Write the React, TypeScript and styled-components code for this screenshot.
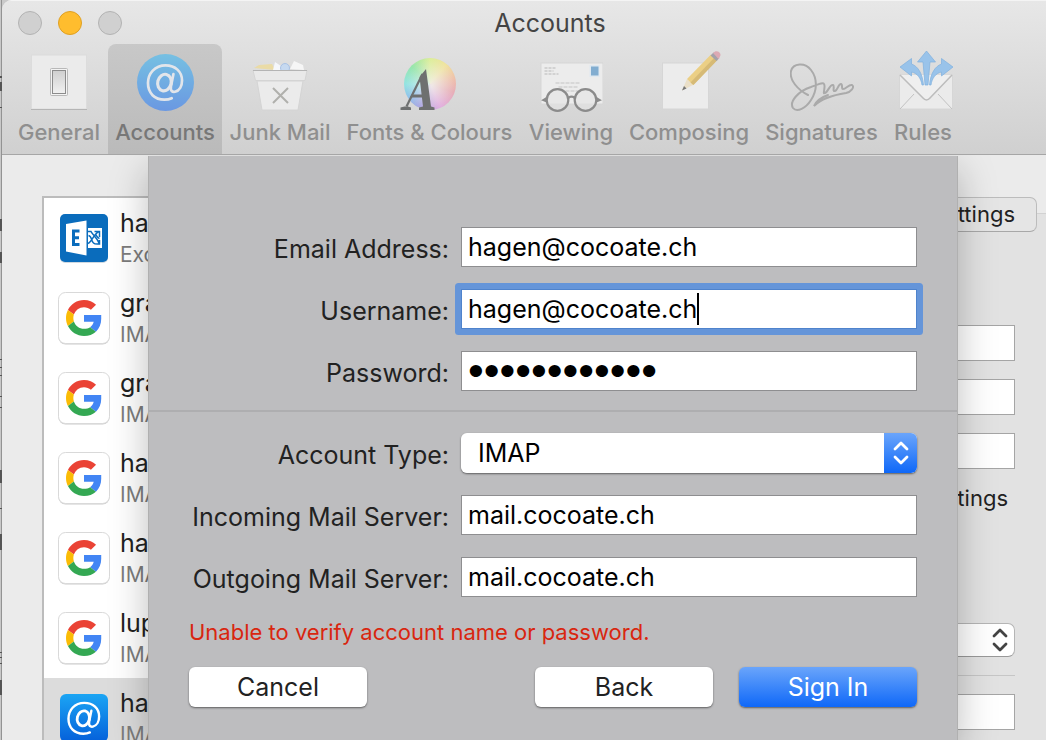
import React from 'react';
import styled, { createGlobalStyle, css } from 'styled-components';

const Global = createGlobalStyle`
  * { box-sizing: border-box; }
  body { margin: 0; background: #c9c9c9; overflow: hidden; font-family: Inter, "Liberation Sans", sans-serif; }
  button, input, select { font-family: inherit; }
`;

const Desktop = styled.div`
  display: flex;
  height: 100vh;
`;

const Behind = styled.div`
  width: 2px;
  flex: none;
  overflow: hidden;
  background: linear-gradient(90deg, #c8c8c8 1px, #939393 1px);
  svg { display: block; }
`;

const Window = styled.main`
  flex: 1;
  min-width: 0;
  display: flex;
  flex-direction: column;
  overflow: hidden;
  border-top-left-radius: 10px;
  background: #ebebeb;
`;

const Header = styled.header`
  height: 155px;
  flex: none;
  display: flex;
  flex-direction: column;
  background: linear-gradient(#e7e7e7, #d0d0d0);
  border-top: 1px solid #f4f4f4;
  border-bottom: 1px solid #a6a6a6;
`;

const TitleBar = styled.div`
  height: 43px;
  flex: none;
  display: grid;
  grid-template-columns: 120px 1fr 84px;
  align-items: center;
  padding-left: 16px;
`;

const Lights = styled.div`
  display: flex;
  gap: 16px;
`;

const Light = styled.button<{ $on?: boolean }>`
  width: 24px;
  height: 24px;
  padding: 0;
  border-radius: 50%;
  border: 1px solid ${p => (p.$on ? '#dfa023' : '#b3b3b3')};
  background: ${p => (p.$on ? '#ffbd2e' : '#d0d0d0')};
`;

const Title = styled.h1`
  margin: 0;
  font-size: 25px;
  line-height: 30px;
  font-weight: 400;
  text-align: center;
  color: #444;
`;

const Tools = styled.nav`
  flex: 1;
  display: flex;
  padding-left: 8px;
`;

const Tool = styled.button<{ $w: number; $on?: boolean }>`
  width: ${p => p.$w}px;
  flex: none;
  display: flex;
  flex-direction: column;
  align-items: center;
  gap: 5px;
  padding: 6px 0 0;
  border: 0;
  border-radius: 8px 8px 0 0;
  background: ${p => (p.$on ? 'linear-gradient(#c8c8c8, #bababa)' : 'none')};
  color: ${p => (p.$on ? '#777' : '#8f8f8f')};
  font-size: 22px;
  line-height: 26px;
  font-weight: 500;
  white-space: nowrap;
  svg { display: block; }
`;

const Body = styled.div`
  flex: 1;
  min-height: 0;
  position: relative;
  display: flex;
  justify-content: space-between;
  padding: 41px 0 0 40px;
  overflow: hidden;
`;

const List = styled.ul`
  width: 300px;
  margin: 0;
  padding: 0;
  list-style: none;
  border: 2px solid #bcbcbc;
  background: #fff;
`;

const Row = styled.li<{ $on?: boolean }>`
  height: 80px;
  display: flex;
  align-items: center;
  gap: 10px;
  padding-left: 14px;
  background: ${p => (p.$on ? '#dcdcdc' : '#fff')};
  svg { display: block; flex: none; }
`;

const RowText = styled.div`
  display: flex;
  flex-direction: column;
  gap: 2px;
`;

const Name = styled.span`
  font-size: 25px;
  line-height: 32px;
  color: #222;
`;

const Kind = styled.span`
  font-size: 21px;
  line-height: 28px;
  color: #7c7c7c;
`;

const Panel = styled.section`
  width: 500px;
  display: flex;
  flex-direction: column;
`;

const TabRow = styled.div`
  display: flex;
  justify-content: flex-end;
  height: 36px;
  padding: 1px 9px 0 0;
  background: linear-gradient(#ebebeb 17px, #d2d2d2 17px, #d2d2d2 18px, #e2e2e2 18px);
`;

const Tab = styled.button`
  height: 35px;
  padding: 0 21px 2px;
  border: 1px solid #bcbcbc;
  border-bottom-color: #a8a8a8;
  border-radius: 7px;
  background: #e5e5e5;
  color: #222;
  font-size: 22px;
  line-height: 30px;
`;

const Settings = styled.div`
  flex: 1;
  display: flex;
  flex-direction: column;
  gap: 18px;
  padding: 93px 31px 0 0;
  background: #e2e2e2;
`;

const BackInput = styled.input`
  width: 100%;
  height: 36px;
  flex: none;
  border: 1px solid #a5a5a5;
  background: #fff;
`;

const Check = styled.label`
  height: 22px;
  display: flex;
  align-items: center;
  justify-content: flex-end;
  gap: 8px;
  padding-right: 7px;
  font-size: 22px;
  white-space: nowrap;
  color: #222;
`;

const BackSelectWrap = styled.div`
  position: relative;
  flex: none;
  margin-top: 96px;
  svg { position: absolute; right: 7px; top: 5px; pointer-events: none; }
`;

const BackSelect = styled.select`
  display: block;
  appearance: none;
  width: 100%;
  height: 34px;
  border: 1px solid #b5b5b5;
  border-bottom-color: #999;
  border-radius: 7px;
  background: #fff;
`;

const Rule = styled.hr`
  width: 100%;
  height: 1px;
  margin: 0;
  border: 0;
  flex: none;
  background: #c6c6c6;
`;

const Sheet = styled.form`
  position: absolute;
  top: 1px;
  bottom: 0;
  left: 146px;
  right: 88px;
  padding-top: 71px;
  background: #bdbdbf;
  border: 1px solid #b0b0b0;
  border-width: 0 1px;
  box-shadow: 0 14px 36px rgba(0, 0, 0, 0.26);
`;

const Fields = styled.div`
  display: grid;
  grid-template-columns: 260px 1fr;
  gap: 22px 12px;
  padding: 0 40px;
`;

const FieldLabel = styled.label`
  padding-top: 6px;
  font-size: 25px;
  line-height: 32px;
  text-align: right;
  white-space: nowrap;
  color: #222;
`;

const field = css`
  display: block;
  width: 100%;
  height: 40px;
  font-size: 25px;
  color: #000;
  background: #fff;
`;

const Input = styled.input<{ $focus?: boolean }>`
  ${field}
  min-width: 0;
  padding: 0 6px;
  border: 1px solid ${p => (p.$focus ? '#4f83cc' : '#8e8e90')};
  border-radius: 0;
  outline: none;
`;

const Password = styled(Input)`
  font-family: "Liberation Sans", sans-serif;
  font-size: 45px;
`;

const InputBox = styled.div`
  position: relative;
  border-radius: 1px;
  box-shadow: 0 0 0 6px #6595d9;
`;

const Caret = styled.span`
  position: absolute;
  left: 7px;
  top: 4px;
  height: 32px;
  font-size: 25px;
  line-height: 32px;
  border-right: 2px solid #000;
  color: transparent;
  pointer-events: none;
`;

const Divider = styled.hr`
  height: 2px;
  margin: 19px 0 21px;
  border: 0;
  background: #aeaeb0;
`;

const raised = css`
  border-radius: 6px;
  box-shadow: 0 1px 2px rgba(0, 0, 0, 0.5);
`;

const SelectWrap = styled.div`
  ${raised}
  position: relative;
  height: 40px;
  overflow: hidden;
`;

const Select = styled.select`
  ${field}
  appearance: none;
  padding: 0 48px 0 17px;
  border: 0;
`;

const Stepper = styled.span`
  position: absolute;
  top: 0;
  right: 0;
  bottom: 0;
  width: 33px;
  display: flex;
  align-items: center;
  justify-content: center;
  background: linear-gradient(#6aa5fb, #0f68f8);
  pointer-events: none;
`;

const ErrorText = styled.p`
  margin: 20px 40px 19px;
  font-size: 22px;
  line-height: 31px;
  color: #d9260f;
`;

const Actions = styled.div`
  display: flex;
  gap: 26px;
  padding: 0 40px;
`;

const Button = styled.button<{ $primary?: boolean; $start?: boolean }>`
  ${raised}
  width: 178px;
  height: 40px;
  padding: 0;
  margin-right: ${p => (p.$start ? 'auto' : '0')};
  border: 0;
  font-size: 25px;
  line-height: 30px;
  color: ${p => (p.$primary ? '#fff' : '#222')};
  background: ${p => (p.$primary ? 'linear-gradient(#6aa5fb, #0f68f8)' : '#fff')};
`;

const icon = { width: 64, height: 64, viewBox: '0 0 64 64', fill: 'none', 'aria-hidden': true } as const;

const GeneralIcon = () => (
  <svg {...icon}>
    <defs><linearGradient id="sw" x2="0" y2="1"><stop stopColor="#cfcfcf" /><stop offset="1" stopColor="#f1f1f1" /></linearGradient></defs>
    <rect x="4.5" y="5" width="55" height="54" fill="#ebebeb" stroke="#dcdcdc" />
    <path d="M4 59.5h56" stroke="#b5b5b5" />
    <rect x="23.5" y="18.5" width="17" height="27" rx="1" fill="#f3f3f3" stroke="#b8b8b8" />
    <rect x="25.5" y="20.5" width="13" height="23" fill="url(#sw)" stroke="#8c8c8c" />
  </svg>
);

const AtGlyph = ({ color }: { color: string }) => (
  <g stroke={color} fill="none" strokeLinecap="round" transform="translate(32 32) scale(1.12) translate(-32 -32)">
    <ellipse cx="31.5" cy="32.5" rx="6" ry="7.5" transform="rotate(14 31.5 32.5)" strokeWidth="2.8" />
    <path d="M39.500 25l-2.200 11c-.6 4 1.200 5.200 3.700 4.700 4-.9 6.200-5.200 6.200-10 0-8-6-13.500-14.700-13.500-9.500 0-15.700 7-15.700 15.800 0 9 6 14.800 14.700 14.800 2.800 0 4.800-.5 6.500-1.300" strokeWidth="2.400" />
  </g>
);

const AccountsIcon = () => (
  <svg {...icon}>
    <defs><linearGradient id="ac" x2="0" y2="1"><stop stopColor="#76c0e2" /><stop offset="1" stopColor="#6a98e2" /></linearGradient></defs>
    <circle cx="32.5" cy="32.5" r="28.5" fill="url(#ac)" />
    <AtGlyph color="#e2e5ea" />
  </svg>
);

const JunkIcon = () => (
  <svg {...icon}>
    <path d="M6 18l5-3 13-1 3 6z" fill="#eadba6" />
    <path d="M25 20l2-8 6 4 3 4z" fill="#f5f7fb" />
    <circle cx="37" cy="18" r="4.500" fill="#c6d9f0" stroke="#a9c2e4" />
    <path d="M42 19l4-8 9 4 1 5z" fill="#f6f6f6" />
    <path d="M9 31h46l-5 29H14z" fill="#ebebeb" stroke="#d4d4d4" />
    <path d="M5 20.500h54l-2 10H7.500z" fill="#e9e9e9" stroke="#d4d4d4" />
    <path d="M5 20.500h54" stroke="#b4b4b4" />
    <path d="M25 38l15 15M40 38L25 53" stroke="#b0b0ac" strokeWidth="2" />
  </svg>
);

const Wheel = styled.div`
  width: 64px;
  height: 64px;
  display: grid;
  padding: 8px 5px 4px 6px;
  > span {
    grid-area: 1 / 1;
    width: 52px;
    height: 52px;
    border-radius: 50%;
    background: radial-gradient(circle at 54% 52%, rgba(240, 240, 235, 0.9), rgba(240, 240, 235, 0) 68%),
      conic-gradient(#dcee9a, #f0e29a 40deg, #eeb8a4 80deg, #e6a4b0 110deg, #e0a8de 155deg, #a8a4e2 205deg, #90c4ea 240deg, #94e4e2 270deg, #98e6ac 315deg, #dcee9a);
  }
  > svg { grid-area: 1 / 1; }
`;

const FontsIcon = () => (
  <Wheel>
    <span />
    <svg width="52" height="52" viewBox="0 0 52 52" overflow="visible" aria-hidden="true">
      <g fill="#6e7070">
        <path d="M20 13.500l2-2.500 5 37.500 3.500 1V52H15v-2.500l4-1L15.500 19z" />
        <path d="M18.500 16L2.500 48.500" stroke="#6e7070" strokeWidth="2.200" />
        <path d="M-3.500 49.500l4-1H4l3 1V52H-3.500zM7.500 36.500H20v3H6z" />
      </g>
    </svg>
  </Wheel>
);

const ViewingIcon = () => (
  <svg {...icon}>
    <g transform="translate(1.500)">
      <rect x=".5" y="13" width="62" height="41" fill="#ececec" stroke="#d6d6d6" />
      <path d="M4 18h12M4 21h9M4 24h14" stroke="#b8b8b8" strokeDasharray="3 1" />
      <path d="M15 33h25M18 37h20M20 41h18" stroke="#c4c4c4" strokeDasharray="4 1" />
      <rect x="49" y="15" width="10" height="12" fill="#dfe8f0" />
      <rect x="50.500" y="16.500" width="7.500" height="9" fill="#82add0" />
      <g stroke="#8b8b8b" strokeWidth="2.200">
        <circle cx="17" cy="50" r="10.800" fill="#e4e4e4" fillOpacity=".6" />
        <circle cx="45" cy="50" r="10.800" fill="#e4e4e4" fillOpacity=".6" />
        <path d="M27.500 48.500c1-2.500 6-2.500 7 0M6.500 48l-3.500 2 3.500 1.500M55.500 48l3.500 2-3.500 1.500" />
      </g>
    </g>
  </svg>
);

const ComposingIcon = () => (
  <svg {...icon}>
    <rect x="5.500" y="13" width="46" height="46" fill="#ececec" stroke="#d6d6d6" />
    <path d="M25 40.500l5-11.500 6 6z" fill="#eadfc8" />
    <path d="M25 40.500l2-4.500 2.500 2.500z" fill="#777" />
    <path d="M30 29L54 4.500l6 5.500L36 35z" fill="#ebcf85" />
    <path d="M33.500 32.500L57.500 7.500l3 2.500-24 25z" fill="#d6ba76" />
    <path d="M53.500 5.500l3-3 6 5.500-3 3z" fill="#a4a2aa" />
    <path d="M56 3l2-1.500c3-1.500 7 2 5 5L61.500 9z" fill="#dcaab4" />
  </svg>
);

const SignaturesIcon = () => (
  <svg {...icon}>
    <path d="M18 46C8 41-1 31 1 22c2-8 14-9 20-1 7 9 6 21 0 30C16 59 7 64 3 59c-4-6 5-17 18-21 8-3 12-5 13-3 2 3-2 11 1 9 3-1 5-9 8-8 2 1-1 7 2 6s3-7 6-7c2 0 0 5 2 5 3 0 6-5 9-4 3 2-1 7-6 8-13 2-25 6-32 13 3-6 8-9 14-11" transform="translate(0 -1)" stroke="#aaa" strokeWidth="2" strokeLinecap="round" />
  </svg>
);

const RulesIcon = () => (
  <svg {...icon} overflow="visible">
    <g transform="translate(3)">
      <rect x="5.500" y="25" width="53" height="34" fill="#ebebeb" stroke="#d6d6d6" />
      <path d="M6 59l14-15M58 59L44 44" stroke="#c2c2c2" />
      <path d="M6 25l23 23c2 2.500 5 2.500 7 0l22-23z" fill="#efefef" />
      <path d="M6 25l23 23c2 2.500 5 2.500 7 0l22-23" stroke="#bdbdbd" strokeWidth="1.500" />
      <g fill="#99c3ea" stroke="#7fb0de" strokeWidth=".7">
        <path d="M32.500 1l9 11h-5.500l-2 23h-3L29 12h-5.500z" />
        <path d="M6 17L17.500 8.500v5.500c6 2 11 9 12 21H28c-1-7-5-12-10.500-13v4z" />
        <path d="M59 17L47.500 8.500v5.500c-6 2-11 9-12 21H37c1-7 5-12 10.500-13v4z" />
      </g>
    </g>
  </svg>
);

const GoogleIcon = () => (
  <svg width="52" height="54" viewBox="0 0 52 54" aria-hidden="true">
    <rect x=".5" y="2.500" width="51" height="51" rx="7" fill="#ccc" />
    <rect x=".5" y="1.500" width="51" height="51" rx="7" fill="#fff" stroke="#d9d9d9" />
    <g transform="translate(8 9) scale(.75)">
      <path fill="#EA4335" d="M24 9.500c3.540 0 6.710 1.220 9.210 3.600l6.850-6.850C35.900 2.380 30.470 0 24 0 14.620 0 6.510 5.380 2.560 13.220l7.980 6.190C12.430 13.720 17.740 9.500 24 9.500z" />
      <path fill="#4285F4" d="M46.980 20H24v9.020h12.940c-.58 2.960-2.260 5.480-4.780 7.180l7.730 6c4.510-4.180 7.090-10.360 7.090-17.650 0-1.570-.1-3.090 0-4.550z" />
      <path fill="#FBBC05" d="M10.530 28.590c-.48-1.450-.76-2.990-.76-4.590s.27-3.140.76-4.590l-7.980-6.190C.92 16.460 0 20.120 0 24c0 3.880.92 7.540 2.560 10.780l7.970-6.190z" />
      <path fill="#34A853" d="M24 48c6.480 0 11.930-2.130 15.890-5.810l-7.730-6c-2.150 1.450-4.920 2.300-8.160 2.300-6.260 0-11.570-4.220-13.470-9.910l-7.980 6.190C6.510 42.620 14.620 48 24 48z" />
    </g>
  </svg>
);

const ExchangeIcon = () => (
  <svg width="52" height="52" viewBox="0 0 52 52" aria-hidden="true">
    <rect x="2" y="3" width="48" height="48" rx="5" fill="#cfd8e0" />
    <rect x="2" y="2" width="48" height="48" rx="5" fill="#0a6cbc" />
    <path d="M8 12l20.500-3.500v35L8 39.500z" fill="#fff" />
    <path d="M21.500 19h-6v13.500h6M15.500 25.700h5.500" fill="none" stroke="#0a6cbc" strokeWidth="3" />
    <path d="M30 16h14v20H30z" fill="#fff" />
    <path d="M30 19.500h3c2 4 6 6 8.500 12.500M41.500 19.500c-4 1-6 6-8 8.500-1.500 2-2 3-3.500 3.500M36.500 19.500h5v5.500M30.500 23.500c4 1 2 5 5 7.500 1.500 1.500 4 1 6 1v-4M38 23c1 1.500 1.500 3 3.500 3.500" fill="none" stroke="#0a6cbc" strokeWidth="1.500" />
  </svg>
);

const MailIcon = () => (
  <svg width="52" height="52" viewBox="0 0 52 52" aria-hidden="true">
    <defs><linearGradient id="ml" x2="0" y2="1"><stop stopColor="#1ba5f4" /><stop offset="1" stopColor="#0560da" /></linearGradient></defs>
    <rect x="2" y="2" width="48" height="48" rx="6" fill="url(#ml)" />
    <g transform="translate(-3 -3) scale(.9)"><AtGlyph color="#fff" /></g>
  </svg>
);

const Chevrons = ({ color }: { color: string }) => (
  <svg width="16" height="24" viewBox="0 0 16 24" fill="none" stroke={color} strokeWidth="2.800" strokeLinecap="round" strokeLinejoin="round" aria-hidden="true">
    <path d="M2 8l6-6 6 6M2 16l6 6 6-6" />
  </svg>
);

// Slivers of the window behind: [top, height]
const marks: [number, number][] = [
  [76, 2], [82, 9], [107, 1], [219, 12], [252, 11], [359, 1], [367, 1], [375, 1], [396, 1], [407, 1],
  [470, 13], [508, 1], [534, 16], [652, 1], [657, 1], [663, 1], [680, 15],
];

const tools = [
  { label: 'General', w: 98, Icon: GeneralIcon },
  { label: 'Accounts', w: 114, Icon: AccountsIcon, on: true },
  { label: 'Junk Mail', w: 116, Icon: JunkIcon },
  { label: 'Fonts & Colours', w: 183, Icon: FontsIcon },
  { label: 'Viewing', w: 100, Icon: ViewingIcon },
  { label: 'Composing', w: 136, Icon: ComposingIcon },
  { label: 'Signatures', w: 129, Icon: SignaturesIcon },
  { label: 'Rules', w: 74, Icon: RulesIcon },
];

const accounts = [
  { name: 'hagen', kind: 'Exchange', Icon: ExchangeIcon },
  { name: 'graf', kind: 'IMAP', Icon: GoogleIcon },
  { name: 'graf', kind: 'IMAP', Icon: GoogleIcon },
  { name: 'hagen', kind: 'IMAP', Icon: GoogleIcon },
  { name: 'hagen', kind: 'IMAP', Icon: GoogleIcon },
  { name: 'lupo', kind: 'IMAP', Icon: GoogleIcon },
  { name: 'hagen', kind: 'IMAP', Icon: MailIcon, on: true },
];

export default function App() {
  return (
    <>
      <Global />
      <Desktop>
        <Behind>
          <svg width="2" height="740" aria-hidden="true">
            {marks.map(([y, h]) => <rect key={y} y={y} width="2" height={h} fill="#555" />)}
          </svg>
        </Behind>
        <Window>
          <Header>
            <TitleBar>
              <Lights>
                <Light aria-label="Close" />
                <Light aria-label="Minimise" $on />
                <Light aria-label="Zoom" />
              </Lights>
              <Title>Accounts</Title>
            </TitleBar>
            <Tools>
              {tools.map(({ label, w, Icon, on }) => (
                <Tool key={label} $w={w} $on={on}>
                  <Icon />
                  {label}
                </Tool>
              ))}
            </Tools>
          </Header>
          <Body>
            <List>
              {accounts.map(({ name, kind, Icon, on }, i) => (
                <Row key={i} $on={on}>
                  <Icon />
                  <RowText>
                    <Name>{name}</Name>
                    <Kind>{kind}</Kind>
                  </RowText>
                </Row>
              ))}
            </List>
            <Panel>
              <TabRow><Tab>Server Settings</Tab></TabRow>
              <Settings>
                <BackInput aria-label="User name" />
                <BackInput aria-label="Account password" />
                <BackInput aria-label="Host name" />
                <Check><input type="checkbox" />Manage connection settings</Check>
                <BackSelectWrap>
                  <BackSelect aria-label="Outgoing account" />
                  <Chevrons color="#444" />
                </BackSelectWrap>
                <Rule />
                <BackInput aria-label="Outgoing host name" />
              </Settings>
            </Panel>
            <Sheet onSubmit={e => e.preventDefault()}>
              <Fields>
                <FieldLabel htmlFor="email">Email Address:</FieldLabel>
                <Input id="email" defaultValue="hagen@cocoate.ch" />
                <FieldLabel htmlFor="user">Username:</FieldLabel>
                <InputBox>
                  <Input id="user" defaultValue="hagen@cocoate.ch" $focus />
                  <Caret aria-hidden="true">hagen@cocoate.ch</Caret>
                </InputBox>
                <FieldLabel htmlFor="pass">Password:</FieldLabel>
                <Password id="pass" type="password" defaultValue="cocoatemail1" />
              </Fields>
              <Divider />
              <Fields>
                <FieldLabel htmlFor="type">Account Type:</FieldLabel>
                <SelectWrap>
                  <Select id="type" defaultValue="IMAP">
                    <option>IMAP</option>
                    <option>POP</option>
                  </Select>
                  <Stepper><Chevrons color="#fff" /></Stepper>
                </SelectWrap>
                <FieldLabel htmlFor="in">Incoming Mail Server:</FieldLabel>
                <Input id="in" defaultValue="mail.cocoate.ch" />
                <FieldLabel htmlFor="out">Outgoing Mail Server:</FieldLabel>
                <Input id="out" defaultValue="mail.cocoate.ch" />
              </Fields>
              <ErrorText role="alert">Unable to verify account name or password.</ErrorText>
              <Actions>
                <Button type="button" $start>Cancel</Button>
                <Button type="button">Back</Button>
                <Button type="submit" $primary>Sign In</Button>
              </Actions>
            </Sheet>
          </Body>
        </Window>
      </Desktop>
    </>
  );
}
